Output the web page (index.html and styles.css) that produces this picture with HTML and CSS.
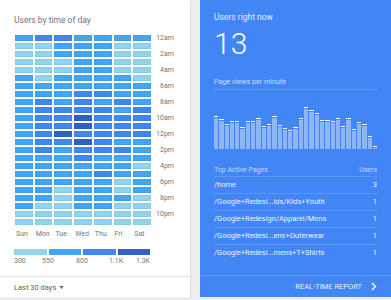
FILE: index.html
```html
<!DOCTYPE html>
<html lang="en">
<head>
    <meta charset="UTF-8">
    <meta name="viewport" content="width=device-width, initial-scale=1.0">
    <title>Audience overview</title>
    <link rel="stylesheet" href="styles.css">
</head>
<body>
    <div class="page">
        <section class="card heat-card">
            <div class="heat-body">
                <h2 class="card-title">Users by time of day</h2>
                <div class="heat">
                    <div class="heat-grid" id="heat-grid"></div>
                    <div class="heat-hours">
                        <span>12am</span><span>2am</span><span>4am</span><span>6am</span>
                        <span>8am</span><span>10am</span><span>12pm</span><span>2pm</span>
                        <span>4pm</span><span>6pm</span><span>8pm</span><span>10pm</span>
                    </div>
                </div>
                <div class="heat-days">
                    <span>Sun</span><span>Mon</span><span>Tue</span><span>Wed</span>
                    <span>Thu</span><span>Fri</span><span>Sat</span>
                </div>
                <div class="legend-bar">
                    <span class="lv0"></span><span class="lv1"></span><span class="lv2"></span><span class="lv3"></span>
                </div>
                <div class="legend-labels">
                    <span>300</span><span>550</span><span>800</span><span>1.1K</span><span>1.3K</span>
                </div>
            </div>
            <div class="heat-footer">
                <span>Last 30 days</span>
                <svg class="caret" width="5" height="3" viewBox="0 0 5 3"><polygon points="0,0 5,0 2.5,3" fill="#757575"/></svg>
            </div>
        </section>

        <section class="card live-card">
            <div class="live-body">
                <div class="live-title">Users right now</div>
                <div class="live-count">13</div>
                <div class="live-sub">Page views per minute</div>
                <div class="live-chart" id="live-chart"></div>
                <div class="pages-head">
                    <span>Top Active Pages</span><span>Users</span>
                </div>
                <div class="pages-row"><span>/home</span><span>3</span></div>
                <div class="pages-row"><span>/Google+Redesi...ids/Kids+Youth</span><span>1</span></div>
                <div class="pages-row"><span>/Google+Redesign/Apparel/Mens</span><span>1</span></div>
                <div class="pages-row"><span>/Google+Redesi...ens+Outerwear</span><span>1</span></div>
                <div class="pages-row last"><span>/Google+Redesi...mens+T+Shirts</span><span>1</span></div>
            </div>
            <div class="live-footer">
                <span>REAL-TIME REPORT</span>
                <svg class="chevron" width="6" height="9" viewBox="0 0 6 9"><polyline points="1,1 4.5,4.5 1,8" fill="none" stroke="#fff" stroke-width="1.4"/></svg>
            </div>
        </section>
    </div>
    <script>
        // 0 = 300, 1 = 550, 2 = 800, 3 = 1.1K ; one row per hour, Sun..Sat
        const heat = [
            '1221111', '0011100', '0011100', '0001100', '0001100', '1011110',
            '1111111', '1112211', '1212121', '1222212', '1223222', '1223222',
            '1232222', '1223211', '1212221', '1112111', '1111110', '1111211',
            '1111101', '1101101', '1101110', '1001100', '0000000', '0000000'
        ];
        const grid = document.getElementById('heat-grid');
        heat.forEach(row => {
            row.split('').forEach(v => {
                const cell = document.createElement('span');
                cell.className = 'cell lv' + v;
                grid.appendChild(cell);
            });
        });

        // page views per minute, last 30 minutes
        const views = [33, 30, 25, 28, 28, 22, 28, 28, 31, 23, 25, 33, 24, 21, 19,
                       22, 31, 42, 39, 36, 29, 29, 28, 31, 23, 31, 20, 27, 25, 13, 3];
        const chart = document.getElementById('live-chart');
        views.forEach(v => {
            const bar = document.createElement('span');
            bar.className = 'bar';
            bar.style.height = v + 'px';
            chart.appendChild(bar);
        });
    </script>
</body>
</html>
```

FILE: styles.css
```css
/* page */
body {
    margin: 0;
    background: #eeeeee;
    font-family: Roboto, "Liberation Sans", sans-serif;
}

.page {
    display: flex;
    gap: 10px;
    width: 391px;
}

.card {
    height: 297px;
    display: flex;
    flex-direction: column;
    box-sizing: border-box;
}

/* users by time of day */
.heat-card {
    width: 190px;
    background: #fff;
    box-shadow: 0 1px 2px rgba(0, 0, 0, 0.2);
}

.heat-body {
    flex: 1;
    padding: 14px 0 0 14px;
}

.card-title {
    margin: 0;
    font-size: 8.5px;
    line-height: 12px;
    font-weight: 400;
    color: #757575;
}

.heat {
    display: flex;
    margin-top: 9px;
}

.heat-grid {
    display: grid;
    grid-template-columns: repeat(7, 1fr);
    grid-auto-rows: 6px;
    gap: 2px;
    width: 136px;
    margin-left: 1px;
}

.cell {
    box-shadow: inset 0 0 0 1px rgba(0, 0, 0, 0.04);
}

.lv0 { background: #92d3ed; }
.lv1 { background: #42a5f5; }
.lv2 { background: #4285f4; }
.lv3 { background: #315fc6; }

.heat-hours {
    display: grid;
    grid-template-rows: repeat(12, 16px);
    width: 23px;
    text-align: right;
    font-size: 7px;
    line-height: 6px;
    color: #757575;
}

.heat-days {
    display: grid;
    grid-template-columns: repeat(7, 1fr);
    gap: 2px;
    width: 136px;
    margin: 3px 0 0 2px;
    font-size: 7px;
    line-height: 9px;
    color: #757575;
}

.legend-bar {
    display: flex;
    gap: 2px;
    width: 136px;
    height: 6px;
    margin-top: 10px;
}

.legend-bar span {
    flex: 1;
}

.legend-labels {
    display: grid;
    grid-template-columns: 1fr 2fr 2fr 2fr 1fr;
    width: 136px;
    margin-top: 2px;
    font-size: 7px;
    line-height: 9px;
    color: #757575;
    white-space: nowrap;
}

.legend-labels span { text-align: center; }
.legend-labels span:first-child { text-align: left; }
.legend-labels span:last-child { text-align: right; }

.heat-footer {
    height: 21px;
    border-top: 1px solid #e0e0e0;
    box-sizing: border-box;
    display: flex;
    align-items: center;
    gap: 3px;
    padding-left: 14px;
    font-size: 7.5px;
    color: #616161;
}

/* users right now */
.live-card {
    width: 191px;
    background: #4285f4;
    color: #fff;
}

.live-body {
    flex: 1;
    padding: 11px 14px 0 14px;
}

.live-title {
    font-size: 8.5px;
    line-height: 12px;
    color: rgba(255, 255, 255, 0.9);
}

.live-count {
    margin-top: 6px;
    font-size: 30px;
    line-height: 30px;
    font-weight: 300;
}

.live-sub {
    margin-top: 18px;
    padding-bottom: 2px;
    border-bottom: 1px solid rgba(255, 255, 255, 0.2);
    font-size: 7.2px;
    line-height: 10px;
    color: rgba(255, 255, 255, 0.75);
}

.live-chart {
    display: flex;
    align-items: flex-end;
    gap: 1px;
    height: 45px;
    margin-top: 14px;
}

.bar {
    flex: 1;
    box-sizing: border-box;
    border-top: 1px solid #fff;
    padding-top: 1px;
    background: rgba(255, 255, 255, 0.4);
    background-clip: content-box;
}

.pages-head {
    display: flex;
    justify-content: space-between;
    margin-top: 16px;
    padding-bottom: 1px;
    border-bottom: 1px solid rgba(255, 255, 255, 0.15);
    font-size: 7px;
    line-height: 10px;
    color: rgba(255, 255, 255, 0.7);
}

.pages-row {
    display: flex;
    justify-content: space-between;
    line-height: 16px;
    border-bottom: 1px solid rgba(255, 255, 255, 0.15);
    font-size: 7.5px;
    color: rgba(255, 255, 255, 0.95);
}

.pages-row.last {
    border-bottom: none;
}

.live-footer {
    height: 22px;
    border-top: 1px solid rgba(255, 255, 255, 0.2);
    box-sizing: border-box;
    display: flex;
    align-items: center;
    justify-content: flex-end;
    gap: 9px;
    padding-right: 14px;
    font-size: 7.5px;
    color: rgba(255, 255, 255, 0.9);
}
```
